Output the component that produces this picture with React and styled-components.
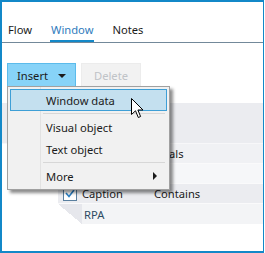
import styled, { createGlobalStyle } from 'styled-components';

const Global = createGlobalStyle`
  body {
    margin: 0;
    background: #fff;
    font-family: "Segoe UI", "Noto Sans", sans-serif;
    font-size: 11.2px;
    color: #1b1b1b;
  }
`;

const Frame = styled.div`
  position: relative;
  box-sizing: border-box;
  width: 264px;
  height: 253px;
  border: 2px solid #1388c8;
  border-right-width: 1px;
  overflow: hidden;
  background: #fff;
`;

const Tabs = styled.div`
  display: flex;
  gap: 17px;
  padding: 17px 0 0 5px;
  height: 23px;
  border-bottom: 1px solid #73899a;
`;

const Tab = styled.div`
  height: 21px;
  line-height: 21px;
  padding: 0 1px;
  color: ${p => (p.active ? '#2f7cbd' : '#1b1b1b')};
  border-bottom: 2px solid ${p => (p.active ? '#1388c8' : 'transparent')};
`;

const Toolbar = styled.div`
  display: flex;
  gap: 5px;
  padding: 20px 0 0 5px;
`;

const Button = styled.div`
  box-sizing: border-box;
  width: ${p => p.w}px;
  height: 25px;
  display: flex;
  align-items: center;
  justify-content: ${p => (p.primary ? 'flex-start' : 'center')};
  padding: ${p => (p.primary ? '0 0 0 9px' : '0')};
  background: ${p => (p.primary ? '#87d3f8' : '#f2f2f2')};
  border: 1px solid ${p => (p.primary ? '#5bbbeb' : '#ececec')};
  color: ${p => (p.primary ? '#1b1b1b' : '#bfc3c7')};
`;

const Caret = styled.span`
  margin-left: 10px;
  width: 0;
  height: 0;
  border-left: 4px solid transparent;
  border-right: 4px solid transparent;
  border-top: 4px solid #1b1b1b;
`;

const Table = styled.div`
  margin-top: 15px;
  display: flex;
  flex-direction: column;
`;

const Header = styled.div`
  height: 40px;
  background: #ebecf0;
  border-bottom: 1px solid #f7f7f9;
`;

const Row = styled.div`
  display: flex;
  align-items: center;
  height: 19px;
  margin-left: ${p => p.indent}px;
  background: ${p => p.bg};
  border-bottom: 1px solid #fafafb;
`;

const Cell = styled.div`
  width: ${p => p.w}px;
  display: flex;
  align-items: center;
  gap: 5px;
`;

const Check = styled.span`
  box-sizing: border-box;
  width: 14px;
  height: 14px;
  border: 1px solid #5a7f9f;
  background: #fff;
  display: flex;
  align-items: center;
  justify-content: center;
`;

const Branch = styled.div`
  display: flex;
  height: 20px;
  margin-left: 56px;
`;

const Elbow = styled.div`
  width: 24px;
  height: 20px;
  background: linear-gradient(to top right, transparent 50%, #e6e7ec 50%);
`;

const BranchRow = styled.div`
  flex: 1;
  display: flex;
  align-items: center;
  padding-left: 2px;
  background: #f3f4f6;
  color: #2d4b63;
`;

const Menu = styled.div`
  position: absolute;
  left: 5px;
  top: 84px;
  width: 163px;
  box-sizing: border-box;
  padding: 2px;
  background: #f1f1f1;
  border: 1px solid #a0a0a0;
  box-shadow: 3px 3px 3px rgba(0, 0, 0, 0.45);
`;

const Item = styled.div`
  position: relative;
  box-sizing: border-box;
  height: 22px;
  display: flex;
  align-items: center;
  padding-left: 35px;
  margin: ${p => (p.hot ? '0' : '0 1px')};
  background: ${p => (p.hot ? '#c4e0ef' : 'transparent')};
  border: ${p => (p.hot ? '1px solid #3e9fd6' : 'none')};
`;

const Sep = styled.div`
  height: 1px;
  margin: 2px 2px 2px 33px;
  background: #d7d7d7;
`;

const Arrow = styled.span`
  position: absolute;
  right: 9px;
  width: 0;
  height: 0;
  border-top: 4px solid transparent;
  border-bottom: 4px solid transparent;
  border-left: 4px solid #1b1b1b;
`;

const Gutter = styled.div`
  position: absolute;
  left: 32px;
  top: 0;
  bottom: 0;
  width: 1px;
  background: #e2e2e2;
`;

const Cursor = styled.svg`
  position: absolute;
  left: 129px;
  top: 96px;
`;

export default function App() {
  return (
    <>
      <Global />
      <Frame>
        <Tabs>
          <Tab>Flow</Tab>
          <Tab active>Window</Tab>
          <Tab>Notes</Tab>
        </Tabs>
        <Toolbar>
          <Button primary w={69}>
            Insert
            <Caret />
          </Button>
          <Button w={60}>Delete</Button>
        </Toolbar>
        <Table>
          <Header />
          <Row indent={56} bg="#f0f1f4">
            <Cell w={91} />
            <Cell>Equals</Cell>
          </Row>
          <Row indent={56} bg="#f6f7f9" />
          <Row indent={56} bg="#ebecf0">
            <Cell w={91} style={{ paddingLeft: 5 }}>
              <Check>
                <svg width="10" height="9" viewBox="0 0 10 9">
                  <path d="M1 4 L4 7.5 L9 1" fill="none" stroke="#2a7fc4" strokeWidth="1.6" />
                </svg>
              </Check>
              Caption
            </Cell>
            <Cell>Contains</Cell>
          </Row>
          <Branch>
            <Elbow />
            <BranchRow>RPA</BranchRow>
          </Branch>
        </Table>
        <Menu>
          <Gutter />
          <Item hot>Window data</Item>
          <Sep />
          <Item>Visual object</Item>
          <Item>Text object</Item>
          <Sep />
          <Item>
            More
            <Arrow />
          </Item>
        </Menu>
        <Cursor width="14" height="21" viewBox="0 0 14 21">
          <path
            d="M0.5 0.5 L0.5 16.5 L4.5 12.8 L7.3 19.5 L9.6 18.5 L6.9 12 L12 12 Z"
            fill="#fff"
            stroke="#000"
            strokeWidth="1"
            strokeLinejoin="round"
          />
        </Cursor>
      </Frame>
    </>
  );
}
